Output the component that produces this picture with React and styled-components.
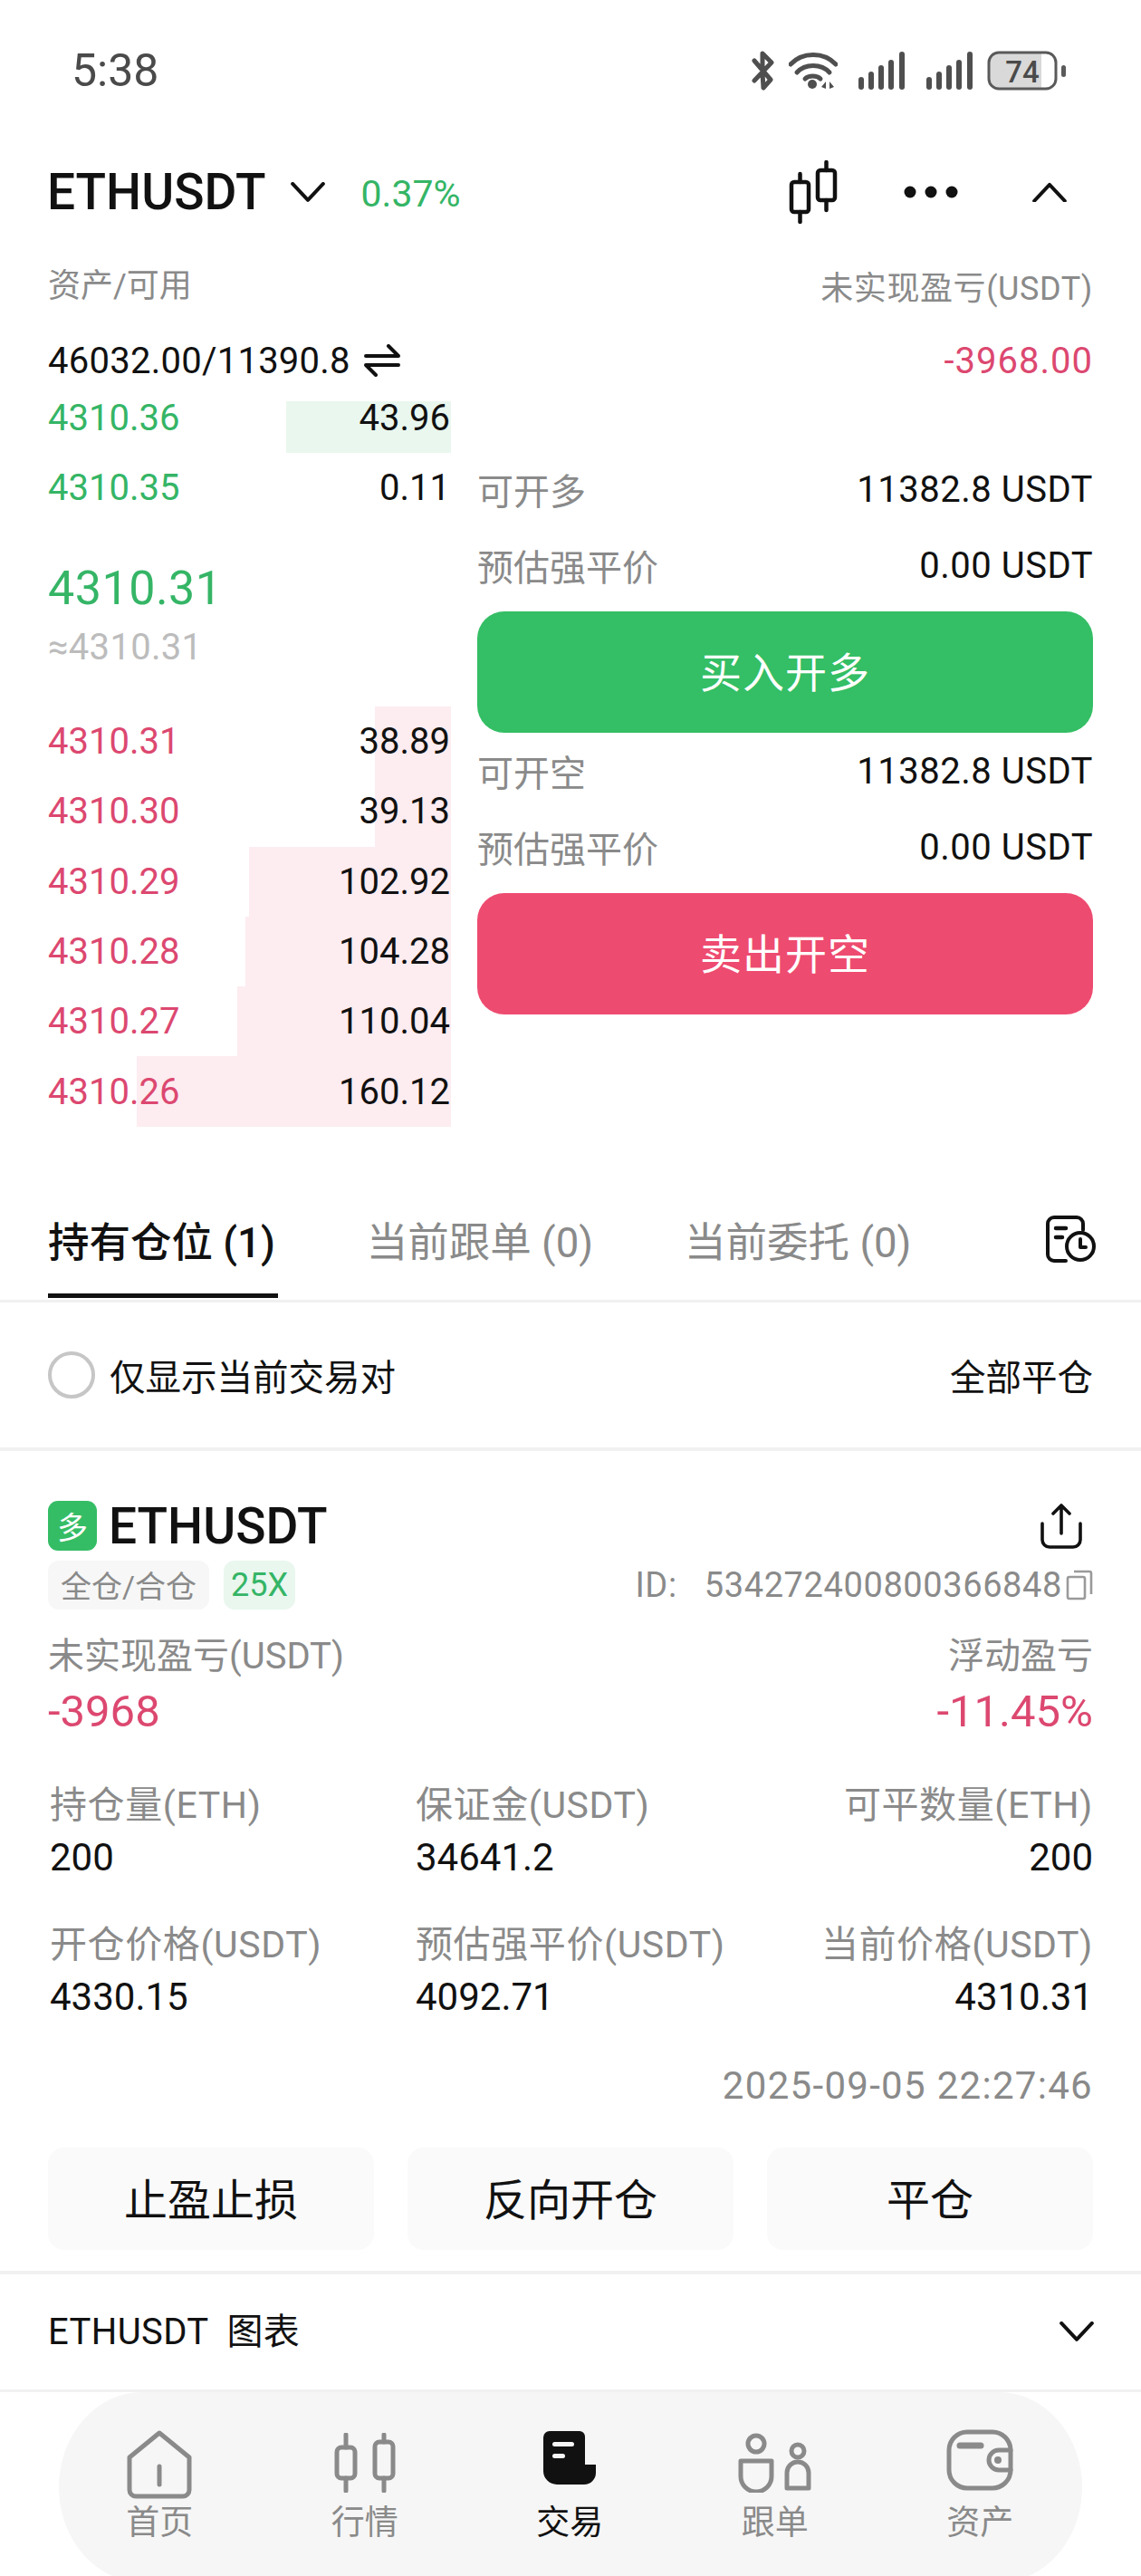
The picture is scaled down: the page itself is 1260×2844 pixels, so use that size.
import React from "react";
import styled, { createGlobalStyle } from "styled-components";

const GREEN = "#35B566";
const RED = "#DC4870";
const GREY = "#8A8A8A";
const INK = "#111111";

const Global = createGlobalStyle`
  html, body { margin: 0; padding: 0; background: #fff; }
  body { font-family: Roboto, "Noto Sans CJK SC", sans-serif; color: ${INK}; }
  * { box-sizing: border-box; }
`;

const Page = styled.div`
  width: 1260px;
  height: 2844px;
  overflow: hidden;
  background: #fff;
`;

const StatusBar = styled.div`
  height: 156px;
  padding: 0 82px 0 79px;
  display: flex;
  align-items: center;
  justify-content: space-between;
`;
const Clock = styled.span`
  font-size: 50px;
  color: #4a4a4a;
`;
const StatusIcons = styled.div`
  display: flex;
  align-items: center;
`;
const Svg = styled.svg`
  display: block;
  flex: none;
  margin-left: ${(p) => p.$ml || 0}px;
`;

const Header = styled.div`
  height: 112px;
  padding: 0 82px 0 52px;
  display: flex;
  align-items: center;
`;
const Symbol = styled.span`
  font-size: 55px;
  font-weight: 500;
  line-height: 60px;
  color: ${INK};
`;
const Change = styled.span`
  font-size: 41px;
  color: ${GREEN};
  margin-left: 40px;
  padding-top: 4px;
`;
const HeaderTools = styled.div`
  margin-left: auto;
  display: flex;
  align-items: center;
`;

const InfoRow = styled.div`
  height: ${(p) => p.$h}px;
  margin-top: ${(p) => p.$mt}px;
  padding: 0 53px;
  display: flex;
  align-items: center;
  justify-content: space-between;
  font-size: ${(p) => p.$size}px;
`;
const AssetLabel = styled.span`
  color: ${GREY};
  margin-bottom: 7px;
`;
const PnlLabel = styled.span`
  color: ${GREY};
  letter-spacing: 0.6px;
`;
const Muted = styled.span`
  color: ${GREY};
`;
const Balance = styled.span`
  display: flex;
  align-items: center;
  gap: 15px;
  letter-spacing: 0.25px;
`;
const Loss = styled.span`
  color: ${RED};
  letter-spacing: 1px;
`;

const Market = styled.div`
  margin-top: 1px;
  padding: 0 53px;
  display: grid;
  grid-template-columns: 445px 1fr;
  column-gap: 29px;
`;
const Book = styled.div`
  display: flex;
  flex-direction: column;
`;
const BookRow = styled.div`
  position: relative;
  height: ${(p) => p.$h}px;
  display: flex;
  align-items: center;
  justify-content: space-between;
  font-size: 40px;
`;
const Depth = styled.i`
  position: absolute;
  right: 0;
  top: ${(p) => p.$top}px;
  bottom: 0;
  background: ${(p) => p.$bg};
`;
const Price = styled.span`
  position: relative;
  color: ${(p) => p.$color};
`;
const Qty = styled.span`
  position: relative;
  color: ${INK};
  padding-right: 1px;
`;
const MidBlock = styled.div`
  height: 203px;
  padding-top: 45px;
`;
const MidPrice = styled.div`
  font-size: 52px;
  line-height: 56px;
  letter-spacing: 0.5px;
  color: ${GREEN};
`;
const MidFiat = styled.div`
  margin-top: 13px;
  font-size: 40px;
  line-height: 48px;
  letter-spacing: 0.3px;
  color: #bcbcbc;
`;

const Orders = styled.div`
  padding-top: 75px;
`;
const OrderLine = styled.div`
  height: 84px;
  display: flex;
  align-items: center;
  justify-content: space-between;
  font-size: 40px;
`;
const OrderValue = styled.span`
  letter-spacing: 0.5px;
`;
const TradeButton = styled.div`
  height: 134px;
  margin: 9px 0 0;
  padding-bottom: 6px;
  border-radius: 30px;
  background: ${(p) => p.$bg};
  color: #fff;
  font-size: 46px;
  letter-spacing: 1px;
  display: flex;
  align-items: center;
  justify-content: center;
`;

const TabBar = styled.div`
  margin-top: 99px;
  height: 95px;
  padding: 0 49px 0 53px;
  display: flex;
  align-items: flex-start;
  gap: 98px;
  border-bottom: 3px solid #f1f1f1;
  position: relative;
`;
const Tab = styled.div`
  height: 90px;
  line-height: 60px;
  padding-right: 3px;
  font-size: 45.5px;
  font-weight: ${(p) => (p.$active ? 500 : 400)};
  color: ${(p) => (p.$active ? INK : GREY)};
  border-bottom: 5px solid ${(p) => (p.$active ? INK : "transparent")};
  white-space: nowrap;
`;
const TabTool = styled.div`
  margin-left: auto;
  align-self: flex-start;
  margin-top: -1px;
`;

const FilterRow = styled.div`
  height: 164px;
  padding: 0 53px;
  display: flex;
  align-items: center;
  font-size: 39.5px;
  border-bottom: 4px solid #f1f1f1;
`;
const Radio = styled.span`
  width: 52px;
  height: 52px;
  border-radius: 50%;
  border: 4px solid #c6c6c6;
  margin-right: 16px;
`;
const RightLink = styled.span`
  margin-left: auto;
`;

const Position = styled.div`
  padding: 54px 53px 0;
`;
const TitleRow = styled.div`
  height: 58px;
  display: flex;
  align-items: center;
  gap: 13px;
`;
const SideBadge = styled.span`
  width: 54px;
  height: 55px;
  border-radius: 11px;
  background: #35bd66;
  color: #fff;
  font-size: 34px;
  display: flex;
  align-items: center;
  justify-content: center;
`;
const Share = styled.div`
  margin-left: auto;
  margin-right: 12px;
`;
const TagRow = styled.div`
  margin-top: 9px;
  display: flex;
  align-items: center;
  gap: 16px;
`;
const Tag = styled.span`
  height: 54px;
  padding: 0 ${(p) => p.$pad}px;
  border-radius: 12px;
  font-size: ${(p) => p.$size}px;
  display: flex;
  align-items: center;
  color: ${(p) => p.$color};
  background: ${(p) => p.$bg};
`;
const OrderId = styled.span`
  margin-left: auto;
  display: flex;
  align-items: center;
  font-size: 38px;
  letter-spacing: 0.6px;
  color: ${GREY};
  white-space: pre;
`;
const Summary = styled.div`
  margin-top: 27px;
  display: flex;
  justify-content: space-between;
`;
const Stat = styled.div`
  text-align: ${(p) => (p.$right ? "right" : "left")};
  padding-left: ${(p) => p.$inset || 0}px;
`;
const SummaryLabel = styled.div`
  font-size: 40px;
  line-height: 50px;
  color: ${GREY};
  white-space: nowrap;
`;
const StatLabel = styled.div`
  font-size: 41px;
  line-height: 50px;
  letter-spacing: 0.6px;
  color: ${GREY};
  white-space: nowrap;
`;
const StatBig = styled.div`
  font-size: 49px;
  line-height: 60px;
  margin-top: 6px;
  color: ${RED};
`;
const StatValue = styled.div`
  font-size: 42px;
  line-height: 50px;
  margin-top: 8px;
  color: ${INK};
`;
const StatGrid = styled.div`
  margin-top: 48px;
  display: grid;
  grid-template-columns: 406px 1fr 1fr;
  row-gap: 46px;
`;
const Stamp = styled.div`
  margin-top: 48px;
  line-height: 50px;
  font-size: 42px;
  letter-spacing: 1.3px;
  text-align: right;
  color: ${GREY};
`;
const Actions = styled.div`
  margin-top: 43px;
  display: grid;
  grid-template-columns: repeat(3, 1fr);
  column-gap: 37px;
`;
const Action = styled.div`
  height: 113px;
  padding-bottom: 4px;
  border-radius: 18px;
  background: #fafafa;
  font-size: 48px;
  display: flex;
  align-items: center;
  justify-content: center;
`;
const ChartRow = styled.div`
  margin-top: 23px;
  height: 134px;
  padding: 0 52px 0 53px;
  border-top: 4px solid #f1f1f1;
  border-bottom: 3px solid #f1f1f1;
  display: flex;
  align-items: center;
  justify-content: space-between;
  font-size: 40px;
  white-space: pre;
`;
const ChartLabel = styled.span`
  padding-bottom: 6px;
  letter-spacing: 0.4px;
`;

const Nav = styled.div`
  margin: 0 65px;
  height: 210px;
  border-radius: 92px / 105px;
  background: #f6f6f6;
  display: grid;
  grid-template-columns: repeat(5, 226.5px);
  padding-top: 41px;
`;
const NavItem = styled.div`
  margin-left: -4px;
  height: 125px;
  display: flex;
  flex-direction: column;
  align-items: center;
  justify-content: space-between;
  font-size: 37px;
  line-height: 42px;
  color: ${(p) => (p.$active ? INK : GREY)};
`;
const NavIcon = styled.div`
  height: 80px;
  padding-top: ${(p) => p.$drop}px;
  display: flex;
  align-items: flex-start;
  justify-content: center;
`;

/* ---------- drawings ---------- */

const Bluetooth = () => (
  <Svg width="26" height="44" viewBox="0 0 26 44" fill="none" stroke="#4f4f4f" strokeWidth="5" strokeLinecap="round" strokeLinejoin="round">
    <path d="M3 11 L21 32 L13 41 L12 25 M12 19 L12 3 L22 13 L3 33" />
  </Svg>
);
const Wifi = () => (
  <Svg $ml={15} width="54" height="44" viewBox="0 0 54 44" fill="none" stroke="#4f4f4f" strokeWidth="5" strokeLinecap="round">
    <path d="M2 15 C15 1 39 1 52 15" />
    <path d="M9 24 C18 14 36 14 45 24" />
    <path d="M18 31 C22 27 31 27 35 31" />
    <circle cx="26" cy="37" r="5" fill="#4f4f4f" stroke="none" />
    <path d="M41 34 L36 40 L41 42 Z M45 34 L50 40 L45 42 Z" fill="#4f4f4f" stroke="none" />
  </Svg>
);
const Signal = ({ ml }) => (
  <Svg $ml={ml} width="51" height="42" viewBox="0 0 51 42" fill="#4f4f4f">
    <rect x="0" y="28" width="6" height="14" rx="3" />
    <rect x="11" y="22" width="6" height="20" rx="3" />
    <rect x="22" y="15" width="6" height="27" rx="3" />
    <rect x="33" y="9" width="6" height="33" rx="3" />
    <rect x="45" y="0" width="6" height="42" rx="3" />
  </Svg>
);
const BatteryIcon = () => (
  <Svg $ml={16} width="88" height="44" viewBox="0 0 88 44">
    <rect x="2" y="2" width="74" height="40" rx="11" fill="#fff" />
    <path d="M13 2 H60 V42 H13 A11 11 0 0 1 2 31 V13 A11 11 0 0 1 13 2 Z" fill="#d9d9d9" />
    <rect x="2" y="2" width="74" height="40" rx="11" fill="none" stroke="#5a5a5a" strokeWidth="3" />
    <rect x="82" y="16" width="5" height="13" rx="2.5" fill="#5a5a5a" />
    <text x="39" y="35" textAnchor="middle" fontFamily="Roboto, sans-serif" fontSize="33" fontWeight="500" fill="#4a4a4a">74</text>
  </Svg>
);
const Chevron = ({ size = 38, up, ml, color = INK }) => (
  <Svg $ml={ml} width={size} height={size * 0.6} viewBox="0 0 38 23" fill="none" stroke={color} strokeWidth="4" strokeLinecap="round" strokeLinejoin="round">
    <path d={up ? "M2 21 L19 3 L36 21" : "M2 2 L19 20 L36 2"} />
  </Svg>
);
const CandleTool = () => (
  <Svg width="54" height="70" viewBox="0 0 54 70" fill="none" stroke={INK} strokeWidth="4.5" strokeLinecap="round" strokeLinejoin="round">
    <rect x="3" y="24" width="19" height="33" rx="3" />
    <path d="M12.5 15 V24 M12.5 57 V68" />
    <rect x="32" y="11" width="19" height="33" rx="3" />
    <path d="M41.5 2 V11 M41.5 44 V55" />
  </Svg>
);
const Dots = () => (
  <Svg $ml={73} width="60" height="14" viewBox="0 0 60 14" fill={INK}>
    <circle cx="7" cy="7" r="6.5" />
    <circle cx="30" cy="7" r="6.5" />
    <circle cx="53" cy="7" r="6.5" />
  </Svg>
);
const Swap = () => (
  <Svg width="40" height="36" viewBox="0 0 40 36" fill="none" stroke={INK} strokeWidth="4" strokeLinecap="round" strokeLinejoin="round">
    <path d="M2 13 H38 L27 2" />
    <path d="M38 23 H2 L13 34" />
  </Svg>
);
const HistoryTool = () => (
  <Svg width="56" height="52" viewBox="0 0 56 52" fill="none" stroke={INK} strokeWidth="4" strokeLinecap="round" strokeLinejoin="round">
    <path d="M22 50 H9 A7 7 0 0 1 2 43 V9 A7 7 0 0 1 9 2 H34 A7 7 0 0 1 41 9 V16" />
    <path d="M11 14 H22 M11 24 H18" strokeWidth="4.5" />
    <circle cx="38" cy="34" r="15" />
    <path d="M38 26 V35 H44" />
  </Svg>
);
const ShareIcon = () => (
  <Svg width="46" height="50" viewBox="0 0 46 50" fill="none" stroke={INK} strokeWidth="3.6" strokeLinecap="round" strokeLinejoin="round">
    <path d="M2 22 V40 A8 8 0 0 0 10 48 H36 A8 8 0 0 0 44 40 V22" />
    <path d="M23 33 V3 M14 11 L23 2 L32 11" />
  </Svg>
);
const CopyIcon = () => (
  <Svg $ml={4} width="30" height="34" viewBox="0 0 30 34" fill="none" stroke="#9a9a9a" strokeWidth="2.6">
    <rect x="2" y="8" width="19" height="24" rx="2" />
    <path d="M9 2 H26 A2 2 0 0 1 28 4 V27" />
  </Svg>
);

const NavStroke = ({ w, h, children }) => (
  <Svg width={w} height={h} viewBox={`0 0 ${w} ${h}`} fill="none" stroke={GREY} strokeWidth="5" strokeLinecap="round" strokeLinejoin="round">
    {children}
  </Svg>
);
const HomeIcon = () => (
  <NavStroke w={72} h={76}>
    <path d="M36 3 L69 30 V66 A7 7 0 0 1 62 73 H10 A7 7 0 0 1 3 66 V30 Z" />
    <path d="M36 40 V60" />
  </NavStroke>
);
const MarketIcon = () => (
  <NavStroke w={68} h={66}>
    <rect x="3" y="16" width="20" height="34" rx="5" />
    <path d="M13 2 V16 M13 50 V64" />
    <rect x="45" y="10" width="20" height="40" rx="5" />
    <path d="M55 2 V10 M55 50 V64" />
  </NavStroke>
);
const TradeIcon = () => (
  <Svg width="58" height="60" viewBox="0 0 58 60">
    <path d="M7 0 H40 A6 6 0 0 1 46 6 V37 H58 V46 A13 13 0 0 1 45 59 H15 A15 15 0 0 1 0 44 V7 A7 7 0 0 1 7 0 Z" fill="#111" />
    <rect x="10" y="12" width="24" height="5" rx="2.5" fill="#f6f6f6" />
    <rect x="10" y="25" width="14" height="5" rx="2.5" fill="#f6f6f6" />
  </Svg>
);
const FollowIcon = () => (
  <NavStroke w={82} h={66}>
    <circle cx="20" cy="12" r="9" />
    <path d="M3 31 H37 V48 A17 17 0 0 1 3 48 Z" />
    <circle cx="66" cy="20" r="7" />
    <path d="M54 61 V44 A12 12 0 0 1 78 44 V61 Z" />
  </NavStroke>
);
const WalletIcon = () => (
  <NavStroke w={74} h={68}>
    <rect x="3" y="3" width="68" height="62" rx="20" />
    <path d="M15 18 H38" strokeWidth="7" />
    <path d="M71 23 H58 A11 11 0 0 0 58 45 H71" />
    <circle cx="57" cy="34" r="4" fill={GREY} stroke="none" />
  </NavStroke>
);

/* ---------- data ---------- */

const bids = [
  { price: "4310.36", qty: "43.96", width: 182, h: 77, top: 20 },
  { price: "4310.35", qty: "0.11", width: 0, h: 77, top: 0 },
];
const asks = [
  { price: "4310.31", qty: "38.89", width: 84 },
  { price: "4310.30", qty: "39.13", width: 84 },
  { price: "4310.29", qty: "102.92", width: 223 },
  { price: "4310.28", qty: "104.28", width: 227 },
  { price: "4310.27", qty: "110.04", width: 236 },
  { price: "4310.26", qty: "160.12", width: 347 },
];
const stats = [
  { label: "持仓量(ETH)", value: "200", inset: 2 },
  { label: "保证金(USDT)", value: "34641.2" },
  { label: "可平数量(ETH)", value: "200", right: true },
  { label: "开仓价格(USDT)", value: "4330.15", inset: 2 },
  { label: "预估强平价(USDT)", value: "4092.71" },
  { label: "当前价格(USDT)", value: "4310.31", right: true },
];
const navItems = [
  { label: "首页", Icon: HomeIcon, drop: 1 },
  { label: "行情", Icon: MarketIcon, drop: 4 },
  { label: "交易", Icon: TradeIcon, drop: 2, active: true },
  { label: "跟单", Icon: FollowIcon, drop: 4 },
  { label: "资产", Icon: WalletIcon, drop: 0 },
];

const OrderGroup = ({ line, bg, cta }) => (
  <>
    <OrderLine>
      <Muted>{line}</Muted>
      <OrderValue>11382.8 USDT</OrderValue>
    </OrderLine>
    <OrderLine>
      <Muted>预估强平价</Muted>
      <OrderValue>0.00 USDT</OrderValue>
    </OrderLine>
    <TradeButton $bg={bg}>{cta}</TradeButton>
  </>
);

export default function App() {
  return (
    <Page>
      <Global />
      <StatusBar>
        <Clock>5:38</Clock>
        <StatusIcons>
          <Bluetooth />
          <Wifi />
          <Signal ml={23} />
          <Signal ml={24} />
          <BatteryIcon />
        </StatusIcons>
      </StatusBar>

      <Header>
        <Symbol>ETHUSDT</Symbol>
        <Chevron ml={27} />
        <Change>0.37%</Change>
        <HeaderTools>
          <CandleTool />
          <Dots />
          <Chevron up ml={82} />
        </HeaderTools>
      </Header>

      <InfoRow $h={38} $mt={28} $size={36}>
        <AssetLabel>资产/可用</AssetLabel>
        <PnlLabel>未实现盈亏(USDT)</PnlLabel>
      </InfoRow>
      <InfoRow $h={48} $mt={40} $size={40}>
        <Balance>
          46032.00/11390.8
          <Swap />
        </Balance>
        <Loss>-3968.00</Loss>
      </InfoRow>

      <Market>
        <Book>
          {bids.map((b) => (
            <BookRow key={b.price} $h={b.h}>
              {b.width > 0 && <Depth $top={b.top} $bg="#e9f7ee" style={{ width: b.width }} />}
              <Price $color={GREEN}>{b.price}</Price>
              <Qty>{b.qty}</Qty>
            </BookRow>
          ))}
          <MidBlock>
            <MidPrice>4310.31</MidPrice>
            <MidFiat>≈4310.31</MidFiat>
          </MidBlock>
          {asks.map((a) => (
            <BookRow key={a.price} $h={77.3}>
              <Depth $top={0} $bg="#fdecf0" style={{ width: a.width }} />
              <Price $color={RED}>{a.price}</Price>
              <Qty>{a.qty}</Qty>
            </BookRow>
          ))}
        </Book>
        <Orders>
          <OrderGroup line="可开多" bg="#34BE65" cta="买入开多" />
          <OrderGroup line="可开空" bg="#EE4B70" cta="卖出开空" />
        </Orders>
      </Market>

      <TabBar>
        <Tab $active>持有仓位 (1)</Tab>
        <Tab>当前跟单 (0)</Tab>
        <Tab>当前委托 (0)</Tab>
        <TabTool>
          <HistoryTool />
        </TabTool>
      </TabBar>

      <FilterRow>
        <Radio />
        仅显示当前交易对
        <RightLink>全部平仓</RightLink>
      </FilterRow>

      <Position>
        <TitleRow>
          <SideBadge>多</SideBadge>
          <Symbol>ETHUSDT</Symbol>
          <Share>
            <ShareIcon />
          </Share>
        </TitleRow>
        <TagRow>
          <Tag $pad={14} $size={34} $color={GREY} $bg="#f7f7f7">全仓/合仓</Tag>
          <Tag $pad={8} $size={36} $color={GREEN} $bg="#e9f7ee">25X</Tag>
          <OrderId>
            {"ID:   534272400800366848"}
            <CopyIcon />
          </OrderId>
        </TagRow>
        <Summary>
          <Stat>
            <SummaryLabel>未实现盈亏(USDT)</SummaryLabel>
            <StatBig>-3968</StatBig>
          </Stat>
          <Stat $right>
            <SummaryLabel>浮动盈亏</SummaryLabel>
            <StatBig>-11.45%</StatBig>
          </Stat>
        </Summary>
        <StatGrid>
          {stats.map((s) => (
            <Stat key={s.label} $right={s.right} $inset={s.inset}>
              <StatLabel>{s.label}</StatLabel>
              <StatValue>{s.value}</StatValue>
            </Stat>
          ))}
        </StatGrid>
        <Stamp>2025-09-05 22:27:46</Stamp>
        <Actions>
          <Action>止盈止损</Action>
          <Action>反向开仓</Action>
          <Action>平仓</Action>
        </Actions>
      </Position>

      <ChartRow>
        <ChartLabel>{"ETHUSDT  图表"}</ChartLabel>
        <Chevron />
      </ChartRow>

      <Nav>
        {navItems.map(({ label, Icon, active, drop }) => (
          <NavItem key={label} $active={active}>
            <NavIcon $drop={drop}>
              <Icon />
            </NavIcon>
            {label}
          </NavItem>
        ))}
      </Nav>
    </Page>
  );
}
